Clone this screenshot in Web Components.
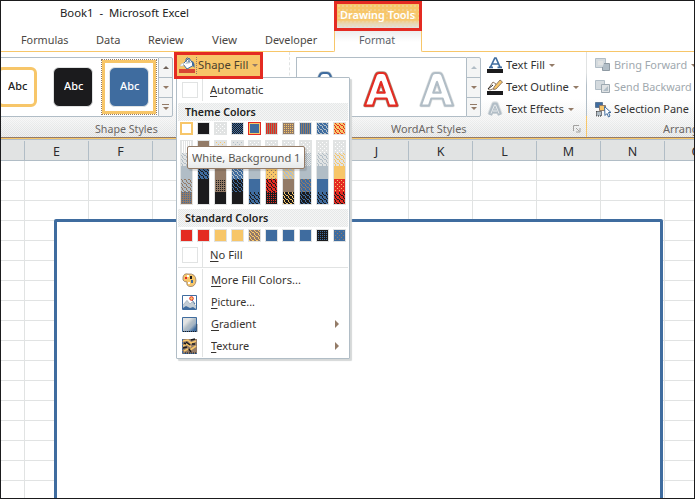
<!DOCTYPE html>
<html lang="en">
<head>
<meta charset="utf-8">
<title>Book1 - Microsoft Excel</title>
<style>
html,body{margin:0;padding:0;overflow:hidden}
body{width:695px;height:499px;font:11.5px "Noto Sans","Open Sans",sans-serif;color:#333;
--red:#e42b22;--yel:#f7c669;--blue:#3f6c9f;--blk:#1b1b1d;--brn:#937b67;--gb:#b1bdc6;--lt:#e1e3e3}
</style>
</head>
<body>
<excel-window></excel-window>
<script>
const define = (name, html, setup) => customElements.define(name, class extends HTMLElement {
  connectedCallback() {
    if (this.shadowRoot) return;
    const root = this.attachShadow({mode: 'open'});
    const t = document.createElement('template');
    t.innerHTML = typeof html === 'function' ? html(this) : html;
    root.append(t.content.cloneNode(true));
    if (setup) setup(this, root);
  }
});

/* One line of text drawn exactly as wide as its "w" attribute. */
define('fit-text', `<style>
:host{display:block;height:16px;line-height:16px;white-space:nowrap;flex:none}
span{display:inline-block;transform-origin:0 0}
::slotted(u){text-decoration:underline;text-underline-offset:2px;text-decoration-thickness:1px}
</style><span><slot></slot></span>`, (el, root) => {
  const w = +el.getAttribute('w');
  el.style.width = w + 'px';
  const s = root.querySelector('span');
  s.style.transform = `scaleX(${w / s.offsetWidth})`;
});

define('drop-caret', `<style>:host{display:block;width:0;height:0;flex:none;border:3px solid transparent;border-top-color:var(--brn);border-bottom:0}</style>`);

const aShape = 'M2 36L13.500 4Q14.500 1.500 17 1.500H21Q23.500 1.500 24.500 4L36 36H27.500L25 28.500H13L10.500 36ZM15 22.500H23L19 11Z';
const A = (fill, stroke, halo) => `<svg width="36" height="37" viewBox="0 0 38 38" stroke-linejoin="round" fill-rule="evenodd">
<path d="${aShape}" fill="${fill}" stroke="${halo}" stroke-width="3.600"/>
<path d="${aShape}" fill="${fill}" stroke="${stroke}" stroke-width="2.200"/></svg>`;

const icons = {
  bucket: `<path d="M4 7L10 1L15 8L8 12Z" fill="#fff" stroke="#3f6c9f"/><path d="M6 7L10 3L12 6Z" fill="#b1bdc6"/><path d="M7 5V2Q8-.5 10 2V5" fill="none" stroke="#3f6c9f"/><path d="M13 4Q16 5 15.500 11L13 8Z" fill="#3f6c9f"/><path d="M1 9Q2 6 5 6L4 9Z" fill="#fff" stroke="#b1bdc6" stroke-width=".6"/><path d="M0 12H16V16H0Z" fill="#d84735"/>`,
  fill: `<path d="M3.500 10L7.800 1H9L13 10M5.500 7H11M2 10.300H6M10.500 10.300H15" fill="none" stroke="#3f6c9f" stroke-width="1.700"/><path d="M0 12H16V16H0Z" fill="#1b1b1d"/>`,
  outline: `<path d="M1 10L6 3L9 5L8 9L3 11Z" fill="#fff" stroke="#937b67"/><path d="M7 8L13 1L15.500 3L9 10L6.500 10.500Z" fill="#f7c669" stroke="#937b67"/><path d="M1 10L6 6" stroke="#1b1b1d"/><path d="M0 12H16V16H0Z" fill="#1b1b1d"/>`,
  effects: `<path d="M3 13.500L7 3H9L13 13.500M5 10H11" fill="none" stroke="#dde1e3" stroke-width="5.500" stroke-linejoin="round"/><path d="M3 14L7 3.500H9L13 14M5 10.500H11" fill="none" stroke="#b1bdc6" stroke-width="4" stroke-linejoin="round"/><path d="M4 12.500L7.500 4H8.500L12 12.500M6 10H10" fill="none" stroke="#e9ecee" stroke-width="1"/>`,
  forward: `<path d="M.5 1.500H10.500V10.500H.5Z" fill="#d4dade" stroke="#b1bdc6"/><path d="M9 6.500H14.500V13.500H7.500V10" fill="#b1bdc6" stroke="#8f9aa3"/><path d="M3 4H8V8H3Z" fill="#e1e3e3"/>`,
  backward: `<path d="M.5 1.500H9.500V10.500H.5Z" fill="#d4dade" stroke="#b1bdc6"/><path d="M6.500 5.500H14.500V13.500H6.500Z" fill="#dfe2e4" stroke="#9da8b0"/><path d="M8 12L13 7V12Z" fill="#b1bdc6"/>`,
  select: `<path d="M.5 1.500H7.500V6.500H.5Z" fill="#3f6c9f" stroke="#5d7896"/><path d="M1.500 10.500H6.500V15H1.500Z" fill="#b1bdc6" stroke="#1b1b1d" stroke-dasharray="1 1"/><path d="M4.500 4.500H10.500V9.500H4.500Z" fill="#f7c669" stroke="#937b67"/><path d="M9.500 5.500L10 14.500L12 12.500L13.500 16L15 15L13.500 11.500L16 11.500Z" fill="#fff" stroke="#3f6c9f"/>`,
  palette: `<path d="M1 5Q2 1 6 2Q14 1 14 9Q13 15 8 14.500Q4 14 5 10Q2 10 1 8Z" fill="#f7c669" stroke="#937b67" stroke-width=".8"/><path d="M5 3H7V5H5Z" fill="#fff"/><path d="M3 5H5V7H3Z" fill="#e42b22"/><path d="M8 4H10V7H8Z" fill="#1b1b1d"/><path d="M9 8H11V11H9Z" fill="#3f6c9f"/><path d="M6 10H8V12H6Z" fill="#fff"/>`,
  picture: `<path d="M.5 1.500H14.500V15.500H.5Z" fill="#fff" stroke="#3f6c9f"/><path d="M1 11L5 6L8 10L10 8L14 12V15H1Z" fill="#c3cdd5"/><path d="M1 11L5 6.500L8 10L10 8L14 12" fill="none" stroke="#b1bdc6"/><path d="M1 14L4 12L8 14L11 13L14 15H1Z" fill="#3f6c9f"/><path d="M10 6L13 10" stroke="#3f6c9f"/><circle cx="9.500" cy="4.500" r="1.800" fill="#f7c669" stroke="#e42b22"/>`,
  gradient: `<defs><linearGradient id="g" x1="0" y1="0" x2="1" y2="1"><stop offset=".3" stop-color="#e1e3e3"/><stop offset=".5" stop-color="#b1bdc6"/><stop offset=".65" stop-color="#a4b4c3"/><stop offset=".85" stop-color="#3f6c9f"/></linearGradient></defs><path d="M.5 1.500H14.500V15.500H.5Z" fill="url(#g)" stroke="#3f6c9f"/><path d="M1 15.500H15V8" fill="none" stroke="#1b1b1d" stroke-dasharray="1 1"/>`,
  texture: `<path d="M0 1H15V16H0Z" fill="#937b67"/><path d="M1 3L6 2L9 5L14 3M1 8L5 6L9 9M8 12L14 8M2 13L6 11" stroke="#f7c669" stroke-width="1.600" fill="none"/><path d="M4 4L8 7M10 6L13 6M1 10L5 9M7 11L9 14M2 5L4 6M9 2L13 1" stroke="#1b1b1d" stroke-width="1.400" fill="none"/><path d="M.5 1V15.500H15" stroke="#3f6c9f" fill="none" stroke-dasharray="2 1"/><path d="M3 15H14" stroke="#1b1b1d" stroke-dasharray="1 1"/>`
};
define('ui-icon', el => `<style>:host{display:block;width:16px;height:17px;flex:none}svg{display:block}</style><svg width="16" height="17" viewBox="0 0 16 17">${icons[el.getAttribute('name')]}</svg>`);

define('title-bar', `<style>:host{display:block;height:29px;box-sizing:border-box;padding:4px 0 0 59px;color:#222}</style><fit-text w="129">Book1&nbsp; -&nbsp; Microsoft Excel</fit-text>`);

define('tab-bar', `<style>
:host{display:flex;height:22px;color:#4b4743}
nav{width:334px;box-sizing:border-box;display:flex;padding:2px 0 0 20px;border-bottom:1px solid var(--yel);border-right:1px solid var(--yel);border-radius:0 0 2px 0}
nav fit-text+fit-text{margin-left:28px}
.mid{width:86px;box-sizing:border-box;padding:2px 0 0 24px;background:linear-gradient(#ebecec,#fff 55%);color:#5a5f68}
.end{flex:1;border-left:1px solid var(--yel);border-bottom:1px solid var(--yel);border-radius:0 0 0 2px}
</style><nav><fit-text w="47">Formulas</fit-text><fit-text w="24">Data</fit-text><fit-text w="36">Review</fit-text><fit-text w="25">View</fit-text><fit-text w="52">Developer</fit-text></nav><div class="mid"><fit-text w="36">Format</fit-text></div><div class="end"></div>`);

define('context-tab', `<style>
:host{display:block;position:absolute;left:333px;top:0;width:88px;height:30px;box-sizing:border-box;border:3px solid var(--red);padding:3px 0 0 3px;color:#fff;font-weight:600;
background:radial-gradient(circle,#eed9b0 .6px,transparent .8px) 0 0/4px 4px,linear-gradient(#f7c669 65%,#e9d6ae 80%,#e1e3e3)}
</style><fit-text w="75">Drawing Tools</fit-text>`);

define('gallery-scroll', `<style>
:host{display:grid;grid-template-rows:1fr 1fr 1fr;width:15px;box-sizing:border-box;border:1px solid var(--gb);border-radius:0 2px 2px 0;background:#f4f5f5;flex:none}
div{display:flex;flex-direction:column;align-items:center;justify-content:center;gap:2px}
div+div{border-top:1px solid var(--gb)}
.up{border:3px solid transparent;border-bottom-color:var(--up,#6f6259);border-top:0}
.bar{width:7px;height:1px;background:var(--brn)}
</style><div><i class="up"></i></div><div><drop-caret></drop-caret></div><div><i class="bar"></i><drop-caret></drop-caret></div>`);

define('shape-style', `<style>
:host{display:flex;box-sizing:border-box;width:40px;height:40px;border-radius:6px;align-items:center;justify-content:center;flex:none;background:var(--bg);color:var(--fg);border:var(--bd,1px solid var(--lt));font-weight:500}
fit-text{margin-top:-2px}
</style><fit-text w="19">Abc</fit-text>`);

define('text-command', el => `<style>
:host{display:flex;height:22px;align-items:center}
ui-icon{margin-right:3px}drop-caret{margin-left:4px}
</style><ui-icon name="${el.getAttribute('icon')}"></ui-icon><slot></slot>${el.hasAttribute('caret') ? '<drop-caret></drop-caret>' : ''}`);

define('ribbon-bar', `<style>
:host{display:flex;height:85px;border-bottom:1px solid var(--brn);box-shadow:0 1px var(--yel);margin-bottom:1px;
background:repeating-conic-gradient(#fff0 0 25%,#fff8 0 50%) 0 0/2px 2px,linear-gradient(#fff 55%,#eceded 82%,#dddfdf)}
section{display:flex;flex-direction:column;box-sizing:border-box;flex:none;overflow:hidden}
.row{display:flex;height:68px}
.g{display:flex;margin-top:5px;height:60px;box-sizing:border-box}
.items{display:flex;align-items:center;box-sizing:border-box;border:1px solid var(--gb);border-right:0;background:#fff;overflow:hidden}
.sel{box-sizing:border-box;width:56px;height:56px;border:1px dotted var(--brn);outline:3px solid var(--yel);outline-offset:-4px;padding:7px;margin-left:8px;flex:none;background:#fff}
.s1{width:289px;border-right:1px dashed var(--lt)}
.s2{width:297px;border-right:1px solid;border-image:linear-gradient(#e1e3e3 25%,#b1bdc6 40% 74%,#f7c669 75%) 1}
.s3{flex:1}
.cmds{padding-top:2px}
.label{display:flex;color:#6a6664;padding-top:1px}
.launch{margin:4px 0 0 106px}
svg{display:block;flex:none}
</style>
<section class="s1"><div class="row"><div class="g"><div class="items" style="width:157px;border-left:0">
<shape-style style="margin-left:-4px;--bg:#fff;--fg:#222;--bd:3px solid var(--yel)"></shape-style>
<shape-style style="margin-left:16px;--bg:var(--blk);--fg:#fff"></shape-style>
<div class="sel"><shape-style style="--bg:var(--blue);--fg:#fff"></shape-style></div>
</div><gallery-scroll></gallery-scroll></div><fill-button></fill-button></div>
<div class="label" style="padding-left:94px"><fit-text w="63">Shape Styles</fit-text></div></section>
<section class="s2"><div class="row"><div class="g" style="margin-left:6px"><div class="items" style="width:170px;padding:4px 0 0 10px;gap:20px">${A('#fff','#3f6c9f','#b1bdc6')}${A('#fff','#e42b22','#a98f7d')}${A('#fff','#b1bdc6','#e1e3e3')}</div><gallery-scroll style="--up:#b1bdc6"></gallery-scroll></div>
<div class="cmds" style="padding-left:6px">
<text-command icon="fill" caret><fit-text w="39">Text Fill</fit-text></text-command>
<text-command icon="outline" caret><fit-text w="63">Text Outline</fit-text></text-command>
<text-command icon="effects" caret><fit-text w="58">Text Effects</fit-text></text-command></div></div>
<div class="label" style="padding-left:101px"><fit-text w="76">WordArt Styles</fit-text><svg class="launch" width="8" height="8"><path d="M.5 6V.5H6M3 3L6 6M7 3V7H3" fill="none" stroke="#a3a2a0"/></svg></div></section>
<section class="s3"><div class="row"><div class="cmds" style="padding-left:8px">
<text-command icon="forward" caret style="color:#a0a8ae"><fit-text w="73">Bring Forward</fit-text></text-command>
<text-command icon="backward" style="color:#a0a8ae"><fit-text w="78">Send Backward</fit-text></text-command>
<text-command icon="select"><fit-text w="75">Selection Pane</fit-text></text-command></div></div>
<div class="label" style="padding-left:76px"><fit-text w="42">Arrange</fit-text></div></section>`);

define('fill-button', `<style>
:host{display:flex;position:relative;z-index:5;box-sizing:border-box;width:89px;height:27px;margin-left:1px;border:3px solid var(--red);background:var(--yel);padding-left:2px;align-items:center;flex:none;color:#4b3f2c}
ui-icon{padding-right:1px;border-right:1px dotted var(--brn);margin-right:1px}
fit-text{margin-top:-1px}
drop-caret{margin-left:4px}
</style><ui-icon name="bucket"></ui-icon><fit-text w="50">Shape Fill</fit-text><drop-caret></drop-caret>`);

define('sheet-grid', () => `<style>
:host{display:flex;flex-direction:column;flex:1;position:relative;overflow:hidden}
header{display:flex;height:20px;border-top:1px solid var(--gb);border-bottom:1px solid var(--gb);background:var(--lt);color:#2b2b2e;font-size:12.500px}
header div{box-sizing:border-box;width:64px;flex:none;border-left:1px solid var(--gb);display:flex;justify-content:center;padding-top:2px;line-height:17px;margin-top:1px}
header div:first-child{width:23px;border:0}
.cells{flex:1;background:repeating-linear-gradient(transparent 0 19px,var(--lt) 19px 20px),repeating-linear-gradient(90deg,var(--lt) 0 1px,transparent 1px 64px) -41px 0/800px 100%}
.shape{position:absolute;left:53px;top:80px;width:609px;height:400px;box-sizing:border-box;border:3px solid var(--blue);border-radius:2px;background:#fff}
</style><header>${['','E','F','','','','J','K','L','M','N','O'].map(c => `<div>${c}</div>`).join('')}</header><div class="cells"></div><div class="shape"></div>`);

/* Swatch fills: one letter is a solid colour; in three letters the last picks how the second is dithered over the first. */
const C = {w:'#fff',k:'#1b1b1d',l:'#e1e3e3',b:'#3f6c9f',r:'#e42b22',y:'#f7c669',n:'#937b67',g:'#b1bdc6'};
const tile = ([a, b, m]) => {
  const dot = (x, y) => `<rect x="${x}" y="${y}" width="1" height="1" fill="${C[b]}"/>`;
  const base = n => `<rect width="${n}" height="${n}" fill="${C[a]}"/>`;
  if (m === 'd') return [2, base(2) + dot(1, 1)];
  if (m === 's') return [4, base(4) + dot(1, 1) + dot(3, 3)];
  if (m === 'm') return [4, base(4) + dot(1, 0) + dot(2, 1) + dot(0, 2) + dot(3, 2) + dot(1, 3)];
  if (m === 'v') return [2, base(2) + dot(1, 0) + dot(1, 1)];
  return [2, base(2) + dot(0, 0) + dot(1, 1)];
};
define('color-swatch', el => {
  const codes = el.getAttribute('fill').split(',');
  const tall = codes.length > 1;
  let defs = '', body = '';
  codes.forEach((c, i) => {
    let f = C[c];
    if (!f) { const [n, s] = tile(c); defs += `<pattern id="p${i}" width="${n}" height="${n}" patternUnits="userSpaceOnUse">${s}</pattern>`; f = `url(#p${i})`; }
    body += `<rect y="${i ? i * 13 - 1 : 0}" width="11" height="13" fill="${f}"/>`;
  });
  return `<style>:host{display:block;width:11px;border:1px solid var(--edge,var(--lt))}svg{display:block;shape-rendering:crispEdges}:host([ring]) svg{outline:1px solid var(--yel);outline-offset:-1px}</style><svg width="11" height="${tall ? 63 : 11}"><defs>${defs}</defs>${body}</svg>`;
});

define('swatch-row', el => `<style>:host{display:flex;gap:4px;padding-left:3px}</style>` +
  el.getAttribute('fills').split(' ').map(f => {
    const [v, tag] = f.split(':');
    return `<color-swatch fill="${v}"${tag === 'hover' ? ' ring style="--edge:var(--yel)"' : tag === 'current' ? ' ring style="--edge:var(--red)"' : ''}></color-swatch>`;
  }).join(''));

define('menu-heading', `<style>:host{display:block;box-sizing:border-box;height:18px;margin:0 1px;padding:1px 0 0 7px;font-weight:600;color:#222;background:repeating-conic-gradient(#fff0 0 25%,#fff9 0 50%) 0 0/2px 2px,#e6e8e8}</style><slot></slot>`);

define('menu-item', el => `<style>
:host{display:flex;align-items:center;height:22px;padding-left:5px;color:#37332f}
.box{width:14px;height:14px;border:1px solid var(--lt);background:#fff}
.lead{width:20px;align-self:stretch;display:flex;align-items:center;border-right:1px solid var(--lt);margin-right:var(--gap,8px);flex:none}
.arrow{margin-left:auto;margin-right:10px;border:4px solid transparent;border-left-color:var(--brn);border-right:0}
</style><div class="lead">${el.hasAttribute('icon') ? `<ui-icon name="${el.getAttribute('icon')}"></ui-icon>` : '<div class="box"></div>'}</div><slot></slot>${el.hasAttribute('sub') ? '<i class="arrow"></i>' : ''}`);

define('hint-tip', `<style>:host{display:block;position:absolute;left:10px;top:68px;width:118px;height:23px;box-sizing:border-box;border:1px solid var(--brn);border-radius:2px;padding:3px 0 0 4px;color:#5a5752;background:linear-gradient(#fff 30%,#e7e9e9);box-shadow:2px 2px 1px #1b1b1d22}</style><fit-text w="108">White, Background 1</fit-text>`);

define('fill-menu', `<style>
:host{display:block;position:absolute;left:175px;top:76px;width:174px;height:282px;box-sizing:border-box;border:1px solid var(--gb);border-radius:1px;background:#fff;box-shadow:2px 2px 1px #d5d8d8}
.rule{height:1px;background:var(--lt);margin:0 1px}
</style>
<menu-item style="--gap:7px;height:22px;padding-top:1px"><fit-text w="53"><u>A</u>utomatic</fit-text></menu-item>
<menu-heading style="margin-top:2px"><fit-text w="71">Theme Colors</fit-text></menu-heading>
<swatch-row style="margin-top:1px" fills="w:hover k lws bkx b:current rnv nyd bnv bgm yrm"></swatch-row>
<swatch-row style="margin-top:5px" fills="lwv,lgm,g,gnm,nbd n,ngx,bkm,k,k lys,gnx,n,nkd,k lgs,bgx,bgm,kbm,k lws,lgx,g,b,bkm lws,yrx,yns,rkm,krd lws,ygx,gym,n,kym lws,lgx,g,bnm,kbm lws,lgm,g,b,bkm lws,lym,y,rys,rkm"></swatch-row>
<menu-heading style="margin-top:4px"><fit-text w="83">Standard Colors</fit-text></menu-heading>
<swatch-row style="margin-top:2px" fills="r r y y nym b b b kbd bns"></swatch-row>
<menu-item style="--gap:7px;height:25px"><fit-text w="33"><u>N</u>o Fill</fit-text></menu-item>
<div class="rule"></div>
<menu-item icon="palette" style="margin-top:1px"><fit-text w="90"><u>M</u>ore Fill Colors...</fit-text></menu-item>
<menu-item icon="picture"><fit-text w="44"><u>P</u>icture...</fit-text></menu-item>
<menu-item icon="gradient" sub><fit-text w="45"><u>G</u>radient</fit-text></menu-item>
<menu-item icon="texture" sub><fit-text w="38"><u>T</u>exture</fit-text></menu-item>
<hint-tip></hint-tip>`);

define('excel-window', `<style>
:host{display:flex;flex-direction:column;position:relative;width:695px;height:499px;box-sizing:border-box;border:1px solid var(--blk);background:#fff;overflow:hidden}
title-bar,tab-bar,ribbon-bar{flex:none}
</style><title-bar></title-bar><tab-bar></tab-bar><ribbon-bar></ribbon-bar><sheet-grid></sheet-grid><context-tab></context-tab><fill-menu></fill-menu>`);
</script>
</body>
</html>
